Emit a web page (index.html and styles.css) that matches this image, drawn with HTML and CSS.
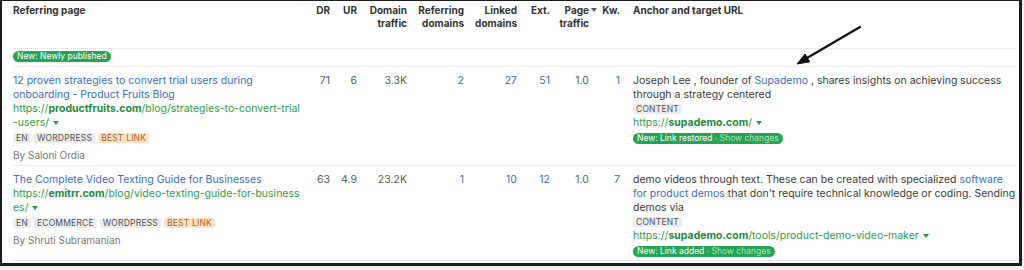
FILE: index.html
```html
<!DOCTYPE html>
<html lang="en">
<head>
<meta charset="utf-8">
<title>Backlinks</title>
<link rel="stylesheet" href="styles.css">
</head>
<body>
<div class="frame">
  <div class="row head">
    <div class="c c1">Referring page</div>
    <div class="c num">DR</div>
    <div class="c num">UR</div>
    <div class="c num">Domain<br>traffic</div>
    <div class="c num">Referring<br>domains</div>
    <div class="c num">Linked<br>domains</div>
    <div class="c num">Ext.</div>
    <div class="c num"><span class="sort">Page<svg class="sort-ic" viewBox="0 0 6 4" width="6" height="4"><path d="M0 0H6L3 4Z" fill="#555"/></svg></span><br>traffic</div>
    <div class="c num">Kw.</div>
    <div class="c anchor">Anchor and target URL</div>
  </div>
  <div class="group"><span class="pill">New: Newly published</span></div>

  <div class="row data">
    <div class="c c1">
      <a class="title">12 proven strategies to convert trial users during onboarding - Product Fruits Blog</a>
      <div class="url"><span>https://<b>productfruits.com</b>/blog/strategies-to-convert-trial</span><br><span>-users/</span><svg class="caret" viewBox="0 0 6 4" width="6" height="4"><path d="M0 0H6L3 4Z" fill="#2f9a4b"/></svg></div>
      <div class="tags"><span class="tag">EN</span><span class="tag">WORDPRESS</span><span class="tag best">BEST LINK</span></div>
      <div class="author">By Saloni Ordia</div>
    </div>
    <div class="c num">71</div>
    <div class="c num">6</div>
    <div class="c num">3.3K</div>
    <div class="c num lk">2</div>
    <div class="c num lk">27</div>
    <div class="c num lk">51</div>
    <div class="c num">1.0</div>
    <div class="c num lk">1</div>
    <div class="c anchor">
      <div class="atext">Joseph Lee , founder of <a>Supademo</a> , shares insights on achieving success through a strategy centered</div>
      <div class="tags a-tags"><span class="tag">CONTENT</span></div>
      <div class="url a-url">https://<b>supademo.com</b>/<svg class="caret" viewBox="0 0 6 4" width="6" height="4"><path d="M0 0H6L3 4Z" fill="#2f9a4b"/></svg></div>
      <div class="badge-wrap"><span class="pill">New: Link restored <span class="dim">· Show changes</span></span></div>
    </div>
  </div>

  <div class="row data">
    <div class="c c1">
      <a class="title">The Complete Video Texting Guide for Businesses</a>
      <div class="url"><span>https://<b>emitrr.com</b>/blog/video-texting-guide-for-business</span><br><span>es/</span><svg class="caret" viewBox="0 0 6 4" width="6" height="4"><path d="M0 0H6L3 4Z" fill="#2f9a4b"/></svg></div>
      <div class="tags"><span class="tag">EN</span><span class="tag">ECOMMERCE</span><span class="tag">WORDPRESS</span><span class="tag best">BEST LINK</span></div>
      <div class="author">By Shruti Subramanian</div>
    </div>
    <div class="c num">63</div>
    <div class="c num">4.9</div>
    <div class="c num">23.2K</div>
    <div class="c num lk">1</div>
    <div class="c num lk">10</div>
    <div class="c num lk">12</div>
    <div class="c num">1.0</div>
    <div class="c num lk">7</div>
    <div class="c anchor">
      <div class="atext">demo videos through text. These can be created with specialized <a>software for product demos</a> that don't require technical knowledge or coding. Sending demos via</div>
      <div class="tags a-tags"><span class="tag">CONTENT</span></div>
      <div class="url a-url">https://<b>supademo.com</b>/tools/product-demo-video-maker<svg class="caret" viewBox="0 0 6 4" width="6" height="4"><path d="M0 0H6L3 4Z" fill="#2f9a4b"/></svg></div>
      <div class="badge-wrap"><span class="pill">New: Link added <span class="dim">· Show changes</span></span></div>
    </div>
  </div>

  <svg class="annot" width="74" height="46" viewBox="0 0 74 46">
    <line x1="68" y1="5" x2="15" y2="36" stroke="#111" stroke-width="2.2" stroke-linecap="round"/>
    <path d="M5 42 L17.7 39.8 L13.1 32 Z" fill="#111" stroke="#111" stroke-width="1" stroke-linejoin="round"/>
  </svg>
</div>
</body>
</html>
```
FILE: styles.css
```css
* { box-sizing: border-box; }
html, body { margin: 0; padding: 0; }
body {
  background: #f1f1f1;
  width: 1024px;
  height: 270px;
  overflow: hidden;
  font-family: Inter, "Noto Sans", sans-serif;
  font-size: 10.5px;
  color: #3a3a3a;
}
.frame {
  position: relative;
  width: 1022px;
  height: 266px;
  background: #fff;
  border: 2px solid #1c1c1c;
  border-top-width: 1px;
  border-right-width: 3px;
  border-bottom-width: 3px;
  padding: 0 3px 0 11px;
}
.row {
  display: grid;
  grid-template-columns: 290px 27px 27px 50px 57px 53px 33px 39px 31px 1fr;
}
.c.num { text-align: right; }
.c.anchor { padding-left: 13px; }

.head {
  height: 48px;
  padding-top: 3px;
  border-bottom: 1px dotted #dcdcdc;
  font-weight: 700;
  font-size: 10px;
  line-height: 13px;
  color: #333;
}
.sort { position: relative; }
.sort-ic { position: absolute; left: 100%; top: 4px; margin-left: 2px; }

.group {
  height: 18px;
  padding-top: 2px;
  border-bottom: 1px solid #ededed;
}
.pill {
  display: inline-block;
  height: 11px;
  line-height: 11px;
  padding: 0 4px;
  border-radius: 6px;
  background: #26a455;
  color: #fff;
  font-size: 8.5px;
  white-space: nowrap;
  vertical-align: top;
}
.pill .dim { color: #a6e2b8; }

.data {
  padding: 7px 0 3px;
  border-bottom: 1px solid #ededed;
  line-height: 14px;
}
.data .num { color: #5a5a5a; }
.data .num.lk { color: #3a6cc2; }

.title { color: #3a6cc2; display: block; line-height: 14px; }
.url { color: #2f9a4b; word-break: break-all; line-height: 14px; }
.url b { font-weight: 700; color: #238a3f; }
.caret { margin-left: 4px; vertical-align: 1px; }

.tags { display: flex; gap: 3px; margin: 3px 0 5px; height: 10px; }
.tag {
  display: inline-block;
  height: 10px;
  line-height: 10px;
  padding: 0 3px;
  border-radius: 2px;
  background: #ececec;
  color: #555;
  font-size: 8.5px;
  letter-spacing: 0.2px;
}
.tag.best { background: #fde2c6; color: #a4652c; }
.author { color: #777; font-size: 10px; line-height: 14px; }

.atext a { color: #3a6cc2; }
.a-tags { margin: 2px 0 0; }
.a-url { margin-top: 2px; }
.badge-wrap { margin-top: 3px; line-height: 11px; height: 11px; }

.annot { position: absolute; left: 790px; top: 21px; }
```
